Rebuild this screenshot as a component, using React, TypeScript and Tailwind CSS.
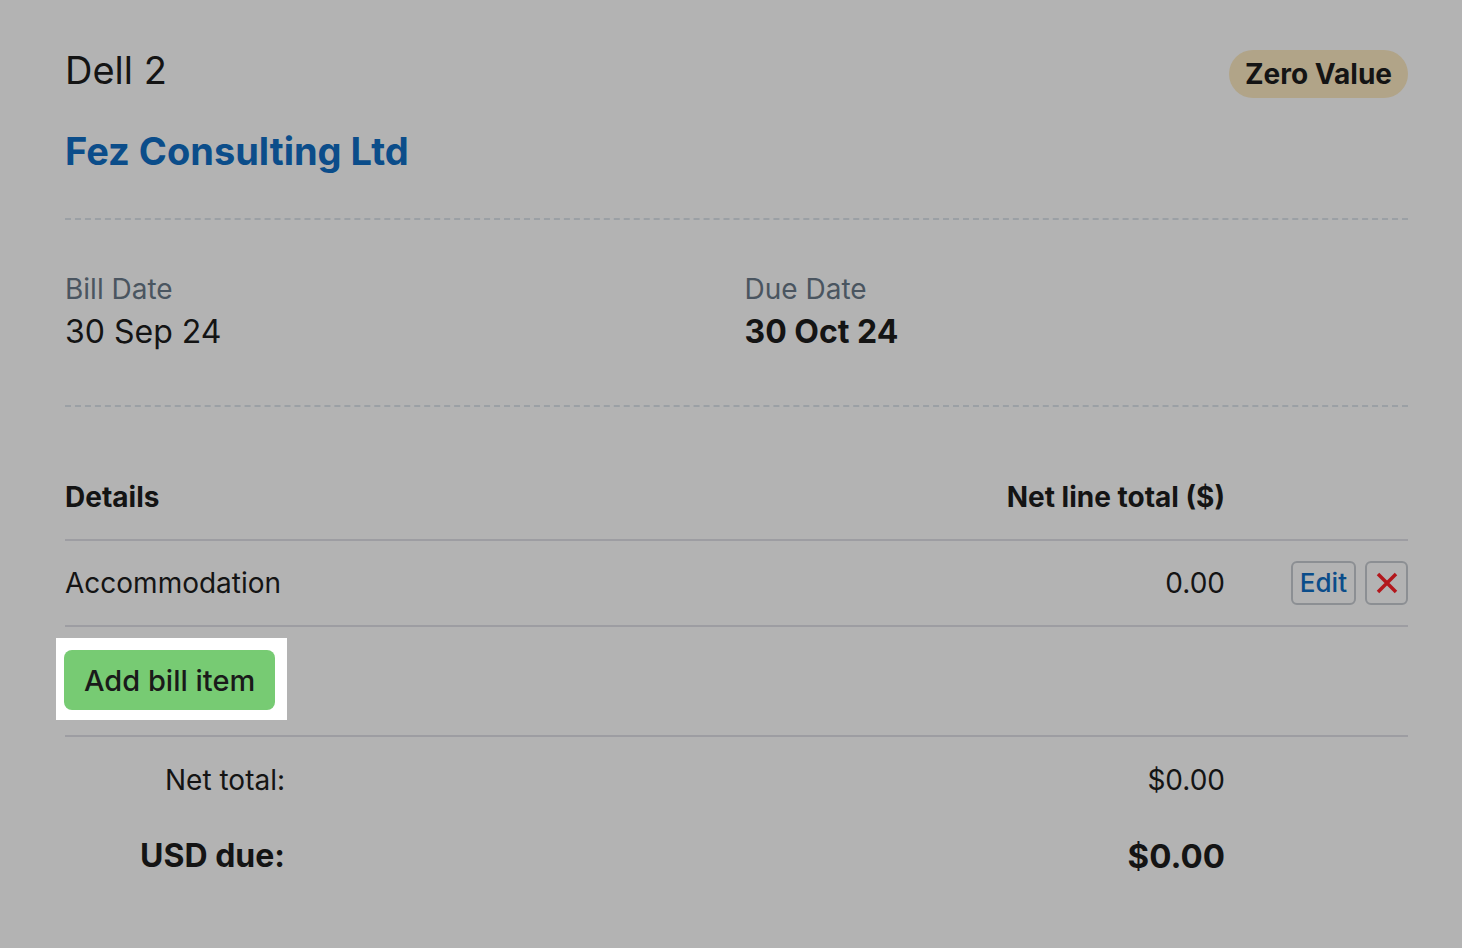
import React from 'react';

const font = { fontFamily: 'Inter, "Noto Sans", sans-serif' };

const App: React.FC = () => {
  return (
    <div className="min-h-screen w-full bg-[#b3b3b3] pl-[65px] pr-[54px] pt-[47px] pb-10 text-[#141414]" style={font}>
      {/* Header */}
      <div className="flex justify-between items-start">
        <div className="text-[38px] leading-[46px] font-normal">Dell 2</div>
        <div className="mt-[3px] h-[48px] px-4 rounded-full bg-[#b1a488] flex items-center text-[28px] font-bold leading-none">
          Zero Value
        </div>
      </div>
      <div className="mt-[30px] text-[38px] leading-[46px] font-bold text-[#0b4d8a]">Fez Consulting Ltd</div>

      <div className="mt-[44px] border-t-2 border-dashed border-[#9ba0a5]"></div>

      {/* Dates */}
      <div className="mt-[52px] grid grid-cols-2">
        <div>
          <div className="text-[28px] leading-[34px] text-[#4a5560]">Bill Date</div>
          <div className="mt-[6px] text-[32px] leading-[40px]">30 Sep 24</div>
        </div>
        <div className="pl-[8px]">
          <div className="text-[28px] leading-[34px] text-[#4a5560]">Due Date</div>
          <div className="mt-[6px] text-[32px] leading-[40px] font-bold">30 Oct 24</div>
        </div>
      </div>

      <div className="mt-[53px] border-t-2 border-dashed border-[#9ba0a5]"></div>

      {/* Table */}
      <div className="pt-[73px] pb-[25px] flex items-center text-[28px] leading-[34px] font-bold">
        <div className="flex-1">Details</div>
        <div className="text-right">Net line total ($)</div>
        <div className="w-[183px]"></div>
      </div>
      <div className="border-t-2 border-[#9d9da2]"></div>
      <div className="py-[20px] flex items-center text-[28px] leading-[34px]">
        <div className="flex-1">Accommodation</div>
        <div className="text-right">0.00</div>
        <div className="w-[183px] flex justify-end gap-[9px]">
          <button className="h-[44px] px-[7px] rounded-md border-2 border-[#8c8f93] text-[#0b4d8a] text-[26px] font-medium leading-none">
            Edit
          </button>
          <button className="h-[44px] w-[43px] rounded-md border-2 border-[#8c8f93] flex items-center justify-center">
            <svg width="22" height="22" viewBox="0 0 22 22">
              <path d="M2 2 L20 20 M20 2 L2 20" stroke="#b3171c" strokeWidth="3.5" />
            </svg>
          </button>
        </div>
      </div>
      <div className="border-t-2 border-[#9d9da2]"></div>

      <div className="pt-[11px] pb-[15px]">
        <div className="-ml-[9px] inline-block bg-white pl-[8px] pr-[12px] pt-[12px] pb-[10px]">
          <button className="h-[60px] px-[20px] rounded-lg bg-[#77cb73] text-[29px] font-medium text-[#1a1a1a] leading-none">
            Add bill item
          </button>
        </div>
      </div>
      <div className="border-t-2 border-[#9d9da2]"></div>

      {/* Totals */}
      <div className="mt-[26px] flex items-center text-[28px] leading-[34px]">
        <div className="w-[220px] text-right">Net total:</div>
        <div className="flex-1 text-right">$0.00</div>
        <div className="w-[183px]"></div>
      </div>
      <div className="mt-[39px] flex items-center leading-[40px] font-bold">
        <div className="w-[220px] text-right text-[32px]">USD due:</div>
        <div className="flex-1 text-right text-[33px]">$0.00</div>
        <div className="w-[183px]"></div>
      </div>
    </div>
  );
};

export default App;
